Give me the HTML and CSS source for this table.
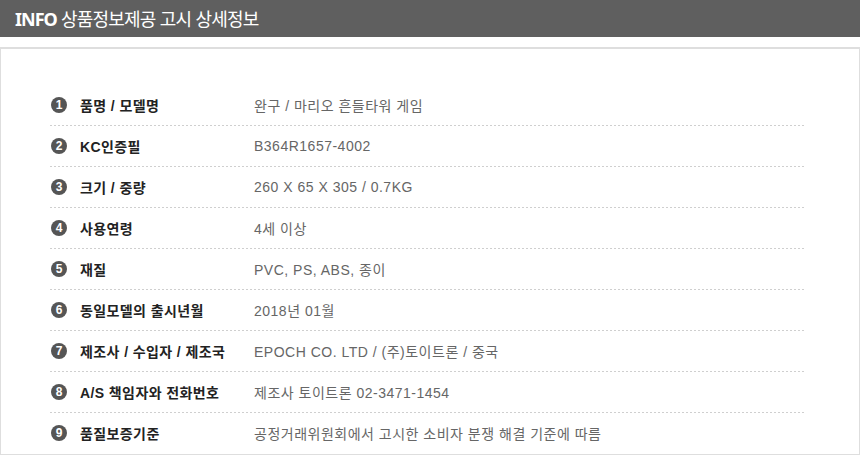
FILE: index.html
```html
<!DOCTYPE html>
<html lang="ko">
<head>
<meta charset="utf-8">
<title>INFO 상품정보제공 고시 상세정보</title>
<link rel="stylesheet" href="styles.css">
</head>
<body>
<div class="header"><b class="en">INFO</b> 상품정보제공 고시 상세정보</div>
<div class="box">
  <ul class="list">
    <li class="row"><span class="num">1</span><span class="label">품명 / 모델명</span><span class="value">완구 / 마리오 흔들타워 게임</span></li>
    <li class="row"><span class="num">2</span><span class="label">KC인증필</span><span class="value">B364R1657-4002</span></li>
    <li class="row"><span class="num">3</span><span class="label">크기 / 중량</span><span class="value">260 X 65 X 305 / 0.7KG</span></li>
    <li class="row"><span class="num">4</span><span class="label">사용연령</span><span class="value">4세 이상</span></li>
    <li class="row"><span class="num">5</span><span class="label">재질</span><span class="value">PVC, PS, ABS, 종이</span></li>
    <li class="row"><span class="num">6</span><span class="label">동일모델의 출시년월</span><span class="value">2018년 01월</span></li>
    <li class="row"><span class="num">7</span><span class="label">제조사 / 수입자 / 제조국</span><span class="value">EPOCH CO. LTD / (주)토이트론 / 중국</span></li>
    <li class="row"><span class="num">8</span><span class="label">A/S 책임자와 전화번호</span><span class="value">제조사 토이트론 02-3471-1454</span></li>
    <li class="row last"><span class="num">9</span><span class="label">품질보증기준</span><span class="value">공정거래위원회에서 고시한 소비자 분쟁 해결 기준에 따름</span></li>
  </ul>
</div>
</body>
</html>
```
FILE: styles.css
```css
* { box-sizing: border-box; }
html, body { margin: 0; padding: 0; background: #fff; }
body { font-family: "Noto Sans CJK KR", "Noto Sans", sans-serif; }

.header {
  height: 37px;
  background: #5f5f5f;
  color: #fff;
  font-size: 18px;
  line-height: 36px;
  padding-left: 15px;
  letter-spacing: -0.8px;
  white-space: nowrap;
}
.header .en {
  font-family: "Noto Sans", "Noto Sans CJK KR", sans-serif;
  font-weight: 700;
  letter-spacing: -1px;
}

.box {
  margin-top: 10px;
  border: 2px solid #dedede;
  border-left-width: 1px;
  border-right-width: 1px;
  padding: 36px 55px 0 49px;
}

.list { list-style: none; margin: 0; padding: 0; }

.row {
  display: flex;
  align-items: center;
  height: 41px;
  padding: 0 0 1px 1px;
  background: repeating-linear-gradient(90deg, #cfcfcf 0 2px, transparent 2px 4px) left bottom / 100% 1px no-repeat;
}
.row.last { background: none; }

.num {
  flex: none;
  width: 16px;
  height: 16px;
  border-radius: 50%;
  background: #555;
  color: #fff;
  font-family: "Liberation Sans", Arial, sans-serif;
  font-weight: 700;
  font-size: 12px;
  line-height: 16px;
  text-align: center;
  margin-right: 13px;
}

.label {
  flex: none;
  width: 174px;
  font-family: "Liberation Sans", "Noto Sans CJK KR", sans-serif;
  font-size: 14px;
  font-weight: 700;
  color: #222;
  letter-spacing: 0.4px;
}

.value {
  font-family: "Liberation Sans", "Noto Sans CJK KR", sans-serif;
  font-size: 14px;
  color: #666;
  letter-spacing: 0.5px;
}
```
